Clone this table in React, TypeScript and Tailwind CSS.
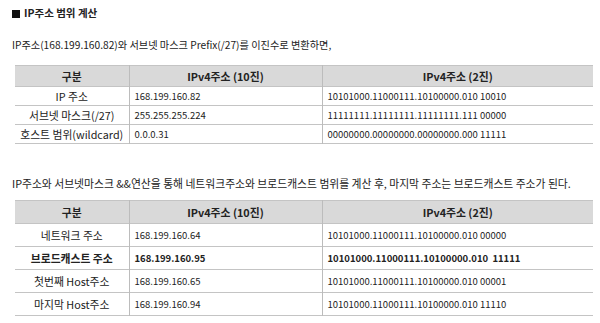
import React from 'react';

type Row = { name: string; dec: string; bin: string; bold?: boolean };

const maskRows: Row[] = [
  { name: 'IP 주소', dec: '168.199.160.82', bin: '10101000.11000111.10100000.010 10010' },
  { name: '서브넷 마스크(/27)', dec: '255.255.255.224', bin: '11111111.11111111.11111111.111 00000' },
  { name: '호스트 범위(wildcard)', dec: '0.0.0.31', bin: '00000000.00000000.00000000.000 11111' },
];

const rangeRows: Row[] = [
  { name: '네트워크 주소', dec: '168.199.160.64', bin: '10101000.11000111.10100000.010 00000' },
  { name: '브로드캐스트 주소', dec: '168.199.160.95', bin: '10101000.11000111.10100000.010  11111', bold: true },
  { name: '첫번째 Host주소', dec: '168.199.160.65', bin: '10101000.11000111.10100000.010 00001' },
  { name: '마지막 Host주소', dec: '168.199.160.94', bin: '10101000.11000111.10100000.010 11110' },
];

function AddrTable({ rows, headH, rowH }: { rows: Row[]; headH: string; rowH: string }) {
  return (
    <table className="w-[578px] border-collapse table-fixed text-[#222]">
      <colgroup>
        <col className="w-[114px]" />
        <col className="w-[193px]" />
        <col className="w-[271px]" />
      </colgroup>
      <thead>
        <tr className={`${headH} bg-[#d9d9d9] border-y border-[#c4c4c4] text-[10.8px]`}>
          <th className="font-bold text-center">구분</th>
          <th className="font-bold text-center border-l border-[#bcbcbc]">IPv4주소 (10진)</th>
          <th className="font-bold text-center border-l border-[#bcbcbc]">IPv4주소 (2진)</th>
        </tr>
      </thead>
      <tbody>
        {rows.map((r, i) => (
          <tr key={i} className={`${rowH} border-b border-[#c4c4c4] ${r.bold ? 'font-bold' : 'font-normal'}`}>
            <td className="text-center text-[10.8px] p-0">{r.name}</td>
            <td className="pl-[5px] pt-[2px] text-[9.5px] border-l border-[#bcbcbc] whitespace-pre">{r.dec}</td>
            <td className="pl-[5px] pt-[2px] text-[9.5px] border-l border-[#bcbcbc] whitespace-pre">{r.bin}</td>
          </tr>
        ))}
      </tbody>
    </table>
  );
}

export default function App() {
  return (
    <div className="w-[600px] h-[323px] bg-white overflow-hidden font-['Noto_Sans_CJK_KR','Noto_Sans',sans-serif] leading-none text-[#222]">
      <div className="pl-[12px] pt-[7px]">
        <h3 className="flex items-center gap-[4px] text-[10.5px] font-bold h-[13px]">
          <span className="w-[8px] h-[8px] bg-[#111]" />
          <span>IP주소 범위 계산</span>
        </h3>
        <p className="mt-[20px] text-[10.2px] h-[12px]">IP주소(168.199.160.82)와 서브넷 마스크 Prefix(/27)를 이진수로 변환하면,</p>
      </div>
      <div className="pl-[15px] mt-[13px]">
        <AddrTable rows={maskRows} headH="h-[21px]" rowH="h-[19px]" />
      </div>
      <p className="pl-[12px] mt-[34px] text-[10.8px] h-[12px]">IP주소와 서브넷마스크 &amp;&amp;연산을 통해 네트워크주소와 브로드캐스트 범위를 계산 후, 마지막 주소는 브로드캐스트 주소가 된다.</p>
      <div className="pl-[15px] mt-[10px]">
        <AddrTable rows={rangeRows} headH="h-[23px]" rowH="h-[23px]" />
      </div>
    </div>
  );
}
